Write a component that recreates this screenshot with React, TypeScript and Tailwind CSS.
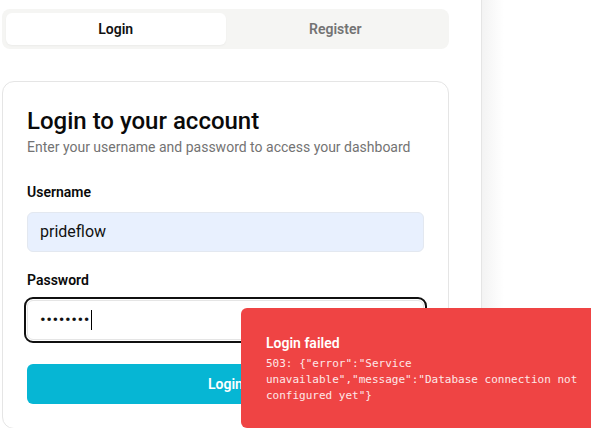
import { FC } from "react";

const Tabs: FC = () => {
  return (
    <div className="ml-[2px] mt-[9px] grid w-[447px] grid-cols-2 rounded-lg bg-[#f5f5f3] p-1">
      <button className="h-8 rounded-md bg-white text-sm font-semibold text-[#111] shadow-[0_1px_2px_rgba(0,0,0,0.04)]">
        Login
      </button>
      <button className="h-8 rounded-md text-sm font-semibold text-[#737373]">
        Register
      </button>
    </div>
  );
};

const LoginCard: FC = () => {
  return (
    <div className="ml-[2px] mt-8 w-[447px] rounded-xl border border-[#e5e5e5] bg-white px-6 pb-6 pt-[23px]">
      <h1 className="text-2xl leading-8 font-medium text-[#0a0a0a]">
        Login to your account
      </h1>
      <p className="text-sm leading-5 text-[#737373]">
        Enter your username and password to access your dashboard
      </p>

      <div className="mt-[25px]">
        <label className="mb-2.5 block text-sm leading-5 font-semibold text-[#0a0a0a]">
          Username
        </label>
        <div className="flex h-10 items-center rounded-md border border-[#e3e8f0] bg-[#e8f0fe] px-3 text-base text-[#111]">
          prideflow
        </div>
      </div>

      <div className="mt-[18px]">
        <label className="mb-2.5 block text-sm leading-5 font-semibold text-[#0a0a0a]">
          Password
        </label>
        <div className="flex h-10 items-center rounded-md border border-[#e5e5e5] bg-white px-3 text-base text-[#111] outline-2 outline-offset-1 outline-[#101010]">
          <span className="text-[17px] tracking-[0.5px]">••••••••</span>
          <span className="ml-[1px] h-5 w-px bg-black" />
        </div>
      </div>

      <button className="mt-6 h-10 w-full rounded-md bg-[#06b6d4] text-sm font-semibold text-white">
        Login
      </button>
    </div>
  );
};

const Toast: FC = () => {
  return (
    <div className="fixed left-[241px] top-[308px] w-[362px] rounded-md bg-[#ef4444] px-[25px] pb-6 pt-[25px] text-white">
      <p className="text-sm leading-5 font-semibold">Login failed</p>
      <p className="mt-[3px] font-['DejaVu_Sans_Mono',monospace] text-[11px] leading-4 text-[#fde8e8]">
        503: {'{"error":"Service unavailable","message":"Database connection not configured yet"}'}
      </p>
    </div>
  );
};

export default function App() {
  return (
    <div className="flex h-[428px] overflow-hidden bg-white font-['Roboto',sans-serif]">
      <div className="w-[482px] shrink-0 border-r border-[#e5e5e5]">
        <Tabs />
        <LoginCard />
      </div>
      <div className="flex-1 bg-[linear-gradient(to_right,#f3f3f3,#ffffff_22px)]" />
      <Toast />
    </div>
  );
}
